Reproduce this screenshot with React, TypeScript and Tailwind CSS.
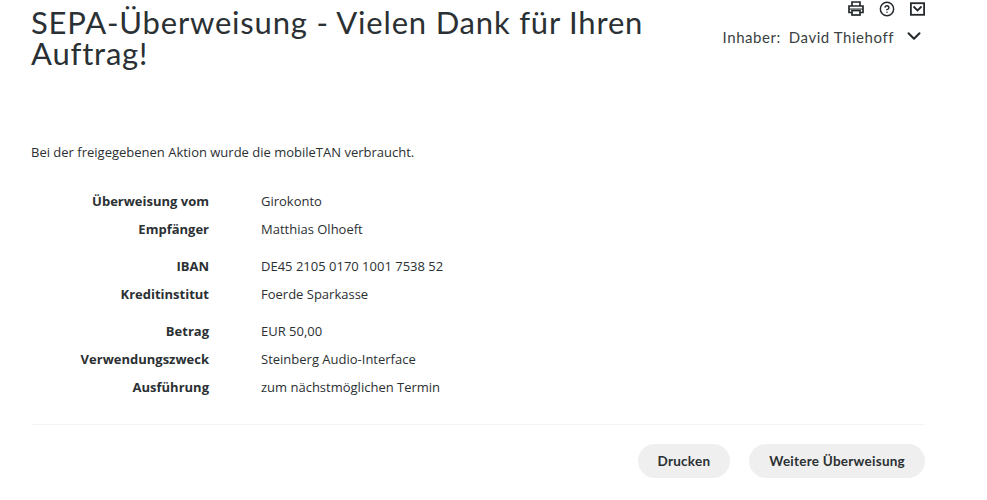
import { CircleHelp, ChevronDown } from "lucide-react";

const groups = [
  [
    { label: "Überweisung vom", value: "Girokonto" },
    { label: "Empfänger", value: "Matthias Olhoeft" },
  ],
  [
    { label: "IBAN", value: "DE45 2105 0170 1001 7538 52" },
    { label: "Kreditinstitut", value: "Foerde Sparkasse" },
  ],
  [
    { label: "Betrag", value: "EUR 50,00" },
    { label: "Verwendungszweck", value: "Steinberg Audio-Interface" },
    { label: "Ausführung", value: "zum nächstmöglichen Termin" },
  ],
];

function PrinterIcon() {
  return (
    <svg width="16" height="15" viewBox="0 0 16 15" fill="none" stroke="#24292c" strokeWidth="1.7">
      <path d="M4 5V1h8v4" />
      <path d="M4 11.5H1V5h14v6.5h-3" />
      <path d="M1 8h14" strokeWidth="1" />
      <rect x="4" y="9.5" width="8" height="4.5" fill="#fff" />
    </svg>
  );
}

function MailIcon() {
  return (
    <svg width="15" height="14" viewBox="0 0 15 14" fill="none" stroke="#24292c" strokeWidth="1.8">
      <rect x="0.9" y="1.2" width="13.2" height="11.6" />
      <path d="M3.5 4.5 7.5 8.5 11.5 4.5" />
    </svg>
  );
}

function App() {
  return (
    <div className="h-[500px] w-[987px] overflow-hidden bg-white pl-[31px] pr-[62px] font-['Open_Sans',sans-serif] text-[#2b3033]">
      <header className="flex items-start justify-between">
        <h1 className="mt-[7px] w-[640px] font-['Lato',sans-serif] text-[31px] leading-[31px] tracking-[0.8px] text-[#2a3033]">
          SEPA-Überweisung - Vielen Dank für Ihren Auftrag!
        </h1>
        <div className="flex flex-col items-end font-['Lato',sans-serif]">
          <div className="flex h-[17px] items-center gap-[15px]">
            <PrinterIcon />
            <CircleHelp size={16} strokeWidth={2.2} color="#24292c" />
            <MailIcon />
          </div>
          <div className="mt-[8px] flex items-center text-[15px] tracking-[0.55px] text-[#3a3f42]">
            <span>Inhaber:</span>
            <span className="ml-[8px]">David Thiehoff</span>
            <ChevronDown size={22} strokeWidth={2.2} color="#24292c" className="ml-[9px] mb-[2px]" />
          </div>
        </div>
      </header>

      <p className="mt-[74px] text-[13px] leading-[18px]">Bei der freigegebenen Aktion wurde die mobileTAN verbraucht.</p>

      <div className="mt-[27px] flex flex-col gap-[9px]">
        {groups.map((group) => (
          <div key={group[0].label}>
            {group.map((row) => (
              <div key={row.label} className="flex h-[28px] items-center text-[13px]">
                <span className="w-[178px] text-right font-bold">{row.label}</span>
                <span className="ml-[52px]">{row.value}</span>
              </div>
            ))}
          </div>
        ))}
      </div>

      <div className="mt-[22px] flex justify-end gap-[19px] border-t border-[#f4f4f4] pt-[19px] font-['Lato',sans-serif] text-[13.5px] font-bold tracking-[0.25px]">
        <button type="button" className="h-[34px] rounded-full bg-[#efefef] px-[20px]">Drucken</button>
        <button type="button" className="h-[34px] rounded-full bg-[#efefef] px-[20px]">Weitere Überweisung</button>
      </div>
    </div>
  );
}

export default App;
